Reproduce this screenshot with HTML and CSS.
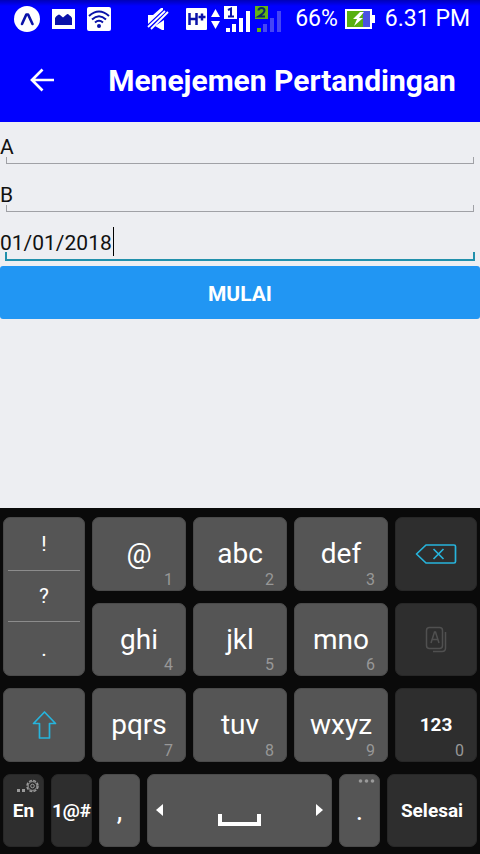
FILE: index.html
```html
<!DOCTYPE html>
<html lang="id">
<head>
<meta charset="utf-8">
<meta name="viewport" content="width=device-width, initial-scale=1">
<title>Menejemen Pertandingan</title>
<link rel="stylesheet" href="styles.css">
</head>
<body>
<header class="top">
  <div class="status">
    <div class="status-group">
      <svg width="26" height="28" viewBox="0 0 26 28"><circle cx="13" cy="14" r="13" fill="#fff"/><path d="M8 19 12.300 9.500h1.800L18.500 19" fill="none" stroke="#0a12a8" stroke-width="2.600" stroke-linecap="round" stroke-linejoin="round"/></svg>
      <svg width="23" height="20" viewBox="0 0 23 20"><path fill="#fff" d="M0 0h23v20H0z"/><path fill="#0a12a8" d="M3 16V9q1-2 3-3 1-1 2 0l3 2.500L14 6q2-2 3 0 2 1 3 3v7z"/></svg>
      <svg width="24" height="24" viewBox="0 0 24 24"><rect width="24" height="24" rx="2" fill="#fff"/><g fill="none" stroke="#0a12a8" stroke-width="2"><path d="M2 9q10-9 20 0"/><path d="M5 12.500q7-6.500 14 0"/><path d="M8 15.500q4-3.500 8 0"/></g><circle cx="12" cy="19" r="2" fill="#0a12a8"/></svg>
    </div>
    <div class="status-group status-right">
      <svg width="35" height="24" viewBox="0 0 35 24"><path fill="#fff" d="M1 8h5l8-7h2v2L1 17zM17 13v10h-2l-7-4z"/><path d="M1 20 18 4M4 22 21 5" stroke="#fff" stroke-width="1.800"/></svg>
      <svg width="21" height="22" viewBox="0 0 21 22"><rect width="21" height="22" rx="1" fill="#fff"/><path d="M3.500 5v12M10.500 5v12M3.500 11h7M12.500 9h7M16 5.500v7" stroke="#0a12a8" stroke-width="2.500"/></svg>
      <svg width="9" height="20" viewBox="0 0 9 20"><path fill="#fff" d="M0 8 4.500 0 9 8zM0 12h9l-4.500 8z"/></svg>
      <svg width="27" height="28" viewBox="0 0 27 28"><path fill="#fff" d="M0 1h13v13H0z"/><path d="M4 5l3-1.500v8M4 11.500h6" fill="none" stroke="#0a12a8" stroke-width="2"/><path fill="#fff" d="M2 23h4v4H2zM8 19h4v8H8zM15 13h4v14h-4zM22 6h4v21h-4z"/></svg>
      <svg width="27" height="28" viewBox="0 0 27 28"><path fill="#63b416" d="M0 1h13v13H0zM2 23h4v4H2z"/><path d="M3.500 5.500q0-2.500 3-2.500t3 2.500-6 6H10" fill="none" stroke="#0a2a68" stroke-width="2"/><path fill="#4545f5" d="M8 19h4v8H8zM15 13h4v14h-4zM22 6h4v21h-4z"/></svg>
      <span class="status-text percent">66%</span>
      <svg width="30" height="20" viewBox="0 0 30 20"><path fill="#fff" d="M0 0h27v6h3v8h-3v6H0z"/><path fill="#58b010" d="M2 2h16v16H2z"/><path fill="#4b52e0" d="M18 2h7v16h-7z"/><path fill="#fff" d="m15 3-7 7h4l-3 7 9-8h-4l5-6z"/></svg>
      <time class="status-text clock">6.31 PM</time>
    </div>
  </div>
  <div class="navbar">
    <button class="back" type="button" aria-label="Kembali">
      <svg width="25" height="24" viewBox="0 0 25 24"><path d="M24 12H2M12.500 1.500 2 12l10.500 10.500" fill="none" stroke="#fff" stroke-width="2.700"/></svg>
    </button>
    <h1 class="title">Menejemen Pertandingan</h1>
  </div>
</header>

<main class="form">
  <div class="field"><input type="text" value="A" aria-label="Tim A"></div>
  <div class="field"><input type="text" value="B" aria-label="Tim B"></div>
  <div class="field active"><input type="text" value="01/01/2018" aria-label="Tanggal"><span class="caret"></span></div>
  <button class="start" type="button">MULAI</button>
</main>

<section class="keyboard" aria-label="Keyboard">
  <div class="key punct">
    <button type="button">!</button>
    <button type="button">?</button>
    <button type="button">.</button>
  </div>
  <button class="key" type="button">@<span class="num">1</span></button>
  <button class="key" type="button">abc<span class="num">2</span></button>
  <button class="key" type="button">def<span class="num">3</span></button>
  <button class="key dark" type="button" aria-label="Hapus">
    <svg width="42" height="22" viewBox="0 0 42 22" fill="none" stroke="#27b4dc" stroke-width="1.700"><path d="M11 2h28q1.500 0 1.500 1.500v15q0 1.500-1.500 1.500H11l-9.500-9z" stroke-linejoin="round"/><path d="m18.500 6 10 10m0-10-10 10"/></svg>
  </button>
  <button class="key" type="button">ghi<span class="num">4</span></button>
  <button class="key" type="button">jkl<span class="num">5</span></button>
  <button class="key" type="button">mno<span class="num">6</span></button>
  <button class="key dark" type="button" aria-label="Papan klip">
    <svg width="22" height="27" viewBox="0 0 22 27" fill="none" stroke="#505050" stroke-width="1.500"><rect x="1.500" y="1.500" width="16" height="21" rx="3"/><path d="M20.500 6v16q0 3.500-3.500 3.500H8M6 17l3.500-11h1L14 17M7 13.500h6"/></svg>
  </button>
  <button class="key" type="button" aria-label="Shift">
    <svg width="25" height="30" viewBox="0 0 25 30"><path d="M12.500 2 1.500 13.500h6V28h10V13.500h6z" fill="none" stroke="#27b4dc" stroke-width="1.700" stroke-linejoin="round"/></svg>
  </button>
  <button class="key" type="button">pqrs<span class="num">7</span></button>
  <button class="key" type="button">tuv<span class="num">8</span></button>
  <button class="key" type="button">wxyz<span class="num">9</span></button>
  <button class="key dark" type="button">123<span class="num">0</span></button>
  <div class="bottom-row">
    <button class="key dark" type="button">En
      <svg class="hint" width="22" height="14" viewBox="0 0 22 14" fill="none" stroke="#9a9a9a"><path d="M0 10h3v3H0zM5 10h3v3H5z" fill="#9a9a9a" stroke="none"/><circle cx="15.500" cy="7" r="5.500" stroke-width="1.500" stroke-dasharray="3 1.320"/><circle cx="15.500" cy="7" r="4.400"/><circle cx="15.500" cy="7" r="1.800"/></svg>
    </button>
    <button class="key dark" type="button">1@#</button>
    <button class="key" type="button">,</button>
    <button class="key space" type="button" aria-label="Spasi">
      <svg width="7" height="12" viewBox="0 0 7 12"><path fill="#fff" d="M7 0v12L0 6z"/></svg>
      <svg class="space-bar" width="43" height="12" viewBox="0 0 43 12"><path fill="none" stroke="#fff" stroke-width="4" d="M2 0v10h39V0"/></svg>
      <svg width="7" height="12" viewBox="0 0 7 12"><path fill="#fff" d="M0 0v12l7-6z"/></svg>
    </button>
    <button class="key" type="button">.
      <svg class="hint" width="17" height="4" viewBox="0 0 17 4" fill="#9a9a9a"><circle cx="2.500" cy="2" r="1.800"/><circle cx="8.500" cy="2" r="1.800"/><circle cx="14.500" cy="2" r="1.800"/></svg>
    </button>
    <button class="key dark" type="button">Selesai</button>
  </div>
</section>
</body>
</html>
```
FILE: styles.css
```css
* {
  box-sizing: border-box;
}

body {
  margin: 0;
  min-height: 100vh;
  display: flex;
  flex-direction: column;
  background: #edeef2;
  font-family: Roboto, sans-serif;
}

button,
input {
  font: inherit;
  color: inherit;
  border: 0;
  margin: 0;
  padding: 0;
  background: none;
}

svg {
  display: block;
  flex: none;
}

/* Header */
.top {
  background: #00f;
  color: #fff;
}

.status {
  display: flex;
  justify-content: space-between;
  align-items: center;
  height: 38px;
  padding: 0 10px 0 14px;
  background: linear-gradient(#0000b8, #00f 6px);
}

.status-group {
  display: flex;
  align-items: center;
  gap: 12px;
}

.status-right {
  gap: 4px;
}

.status-text {
  font-size: 23px;
  line-height: 38px;
  white-space: nowrap;
}

.percent {
  padding: 0 3px 0 9px;
}

.clock {
  padding-left: 6px;
}

.navbar {
  display: flex;
  align-items: center;
  height: 84px;
}

.back {
  display: grid;
  place-items: center;
  width: 84px;
  height: 84px;
}

.title {
  flex: 1;
  margin: 0;
  padding-top: 2px;
  font-size: 30px;
  font-weight: 700;
  line-height: 84px;
  text-align: center;
  white-space: nowrap;
}

/* Form */
.form {
  flex: 1;
}

.field {
  position: relative;
  color: #111;
}

.field input {
  display: block;
  width: 100%;
  height: 48px;
  padding-top: 2px;
  font-size: 21px;
  outline: 0;
}

.field::after {
  content: "";
  position: absolute;
  left: 6px;
  right: 6px;
  bottom: 6px;
  height: 6px;
  border: 1px solid #a0a1a6;
  border-top: 0;
  pointer-events: none;
}

.field.active::after {
  left: 5px;
  right: 5px;
  bottom: 5px;
  height: 7px;
  border: 2px solid #2190ac;
  border-top: 0;
}

.caret {
  position: absolute;
  left: 113px;
  top: 9px;
  width: 1px;
  height: 29px;
  background: #000;
}

.start {
  display: block;
  width: 100%;
  height: 53px;
  padding-top: 2px;
  border-radius: 3px;
  background: #2196f3;
  color: #fff;
  font-size: 21px;
  font-weight: 700;
}

/* Keyboard */
.keyboard {
  display: grid;
  grid-template-columns: 82fr 94fr 94fr 94fr 82fr;
  grid-template-rows: repeat(4, 1fr);
  gap: 12px 7px;
  min-height: 346px;
  padding: 9px 3px 7px;
  background: #0a0a0a;
  color: #fff;
}

.key {
  position: relative;
  display: flex;
  align-items: center;
  justify-content: center;
  min-width: 0;
  border: 1px solid #4a4a4a;
  border-radius: 7px;
  background: #555;
  font-size: 28px;
}

.key.dark {
  border-color: #272727;
  background: #2e2e2e;
  font-size: 19px;
  font-weight: 700;
}

.num {
  position: absolute;
  right: 12px;
  bottom: 0;
  color: #989898;
  font-size: 16px;
  font-weight: 400;
  line-height: 20px;
}

.punct {
  grid-row: span 2;
  display: grid;
  grid-template-rows: 52fr 52fr 54fr;
  justify-content: stretch;
  align-items: stretch;
  padding: 0 4px;
  font-size: 21px;
}

.punct button + button {
  border-top: 1px solid #8c8c8c;
}

.bottom-row {
  grid-column: 1 / -1;
  display: grid;
  grid-template-columns: 41fr 41fr 41fr 185fr 41fr 90fr;
  gap: 7px;
}

.space {
  justify-content: space-between;
  padding: 0 8px;
}

.space-bar {
  align-self: flex-end;
  margin-bottom: 20px;
}

.hint {
  position: absolute;
  top: 4px;
  right: 4px;
}
```
